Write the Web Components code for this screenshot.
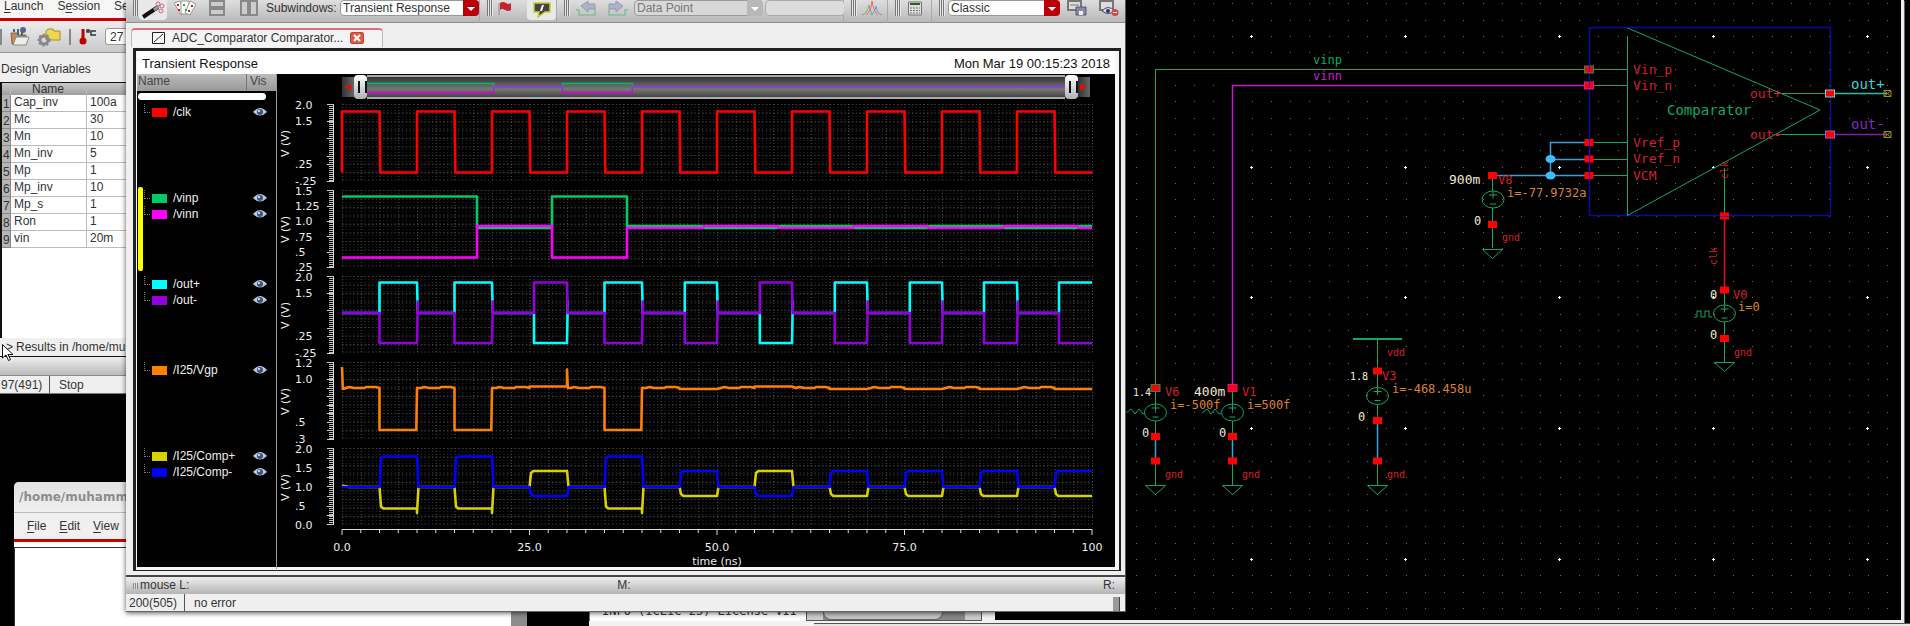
<!DOCTYPE html>
<html lang="en">
<head>
<meta charset="utf-8">
<title>ADC_Comparator - Virtuoso</title>
<style>
html,body{margin:0;height:100%;background:#000;overflow:hidden}
body{font:12px "Liberation Sans",Arial,sans-serif;color:#333}
</style>
</head>
<body>
<eda-desktop></eda-desktop>
<script>
const base = `<style>*{box-sizing:border-box}:host{display:block}svg{display:block;overflow:visible}
button,input,select{font:inherit;color:inherit;margin:0;padding:0;border:0;background:none}
a{color:inherit;text-decoration:none}</style>`;
function define(name, html, setup) {
  customElements.define(name, class extends HTMLElement {
    constructor() {
      super();
      const root = this.attachShadow({mode: 'open'});
      root.innerHTML = base + (typeof html === 'function' ? html(this) : html);
      if (setup) setup(root, this);
    }
  });
}

/* ---------- toolbar pieces ---------- */
define('tool-group', `<style>
:host{display:flex;align-items:center;height:23px;padding:0 0 6px 7px;border-bottom:1px solid #8e8e8e;border-right:1px solid #aaa;background:linear-gradient(#dedede,#b9b9b9)}
:host([last]){flex:1;border-right:0}
i{flex:none;width:6px;height:16px;background:repeating-linear-gradient(90deg,#777 0 1px,#e8e8e8 1px 2px)}
</style><i></i><slot></slot>`);
define('drop-down', `<style>
:host{flex:none;position:relative;height:16px}
:host([wide]){width:139px}:host([data]){width:129px;color:#777}:host([style-set]){width:112px}
select{appearance:none;width:100%;height:16px;padding:0 18px 0 2px;background:#fff;border:1px solid #999;border-radius:4px;line-height:14px}
span{position:absolute;right:0;top:0;width:16px;height:16px;background:#b90008;border-radius:0 4px 4px 0;pointer-events:none}
span::after{content:"";position:absolute;left:4px;top:7px;border:4px solid transparent;border-top-color:#fff;border-bottom:0}
:host([data]) select{background:#d8d8d8}:host([data]) span{background:#b8b8b8}
</style><select></select><span></span>`, (root, el) => {
  const s = root.querySelector('select');
  s.setAttribute('aria-label', el.getAttribute('label'));
  s.append(new Option(el.getAttribute('value')));
});

/* ---------- results browser window ---------- */
const vars = [['Cap_inv','100a'],['Mc','30'],['Mn','10'],['Mn_inv','5'],['Mp','1'],['Mp_inv','10'],['Mp_s','1'],['Ron','1'],['vin','20m']];
define('variables-window', `<style>
:host{display:flex;flex-direction:column;background:#efefef;overflow:hidden;white-space:nowrap}
nav{display:flex;height:18px;padding-left:4px;line-height:12px;gap:14px;background:#f6f6f6}
u{text-underline-offset:2px}
.rule{height:3px;background:#c00}
.tools{display:flex;align-items:center;gap:8px;height:32px;background:linear-gradient(#eee,#c9c9c9);border-bottom:1px solid #999}
.tools i{width:3px;height:16px;border:1px solid #888;border-width:0 1px}
.tools svg{flex:none}
.tools input{width:60px;height:17px;padding-left:4px;background:#fff;border:1px solid #999;border-radius:3px}
h2{margin:0;padding:8px 0 0 1px;height:29px;font:12px/17px "Liberation Sans",Arial,sans-serif}
.box{border:1px solid #111;border-width:1px 0 0 2px;height:256px;background:#fff}
table{border-collapse:separate;border-spacing:0;table-layout:fixed;width:200px}
th,td{padding:0 0 0 3px;height:17px;line-height:14px;vertical-align:top;text-align:left;font-weight:400;border:1px solid #bbb;border-width:0 1px 1px 0}
thead th{height:12px;line-height:12px;background:linear-gradient(#c9c9c9,#9f9f9f);border-bottom:0;padding:0 0 0 21px}
tbody th{background:#b5b5b5;border-color:#888;padding:2px 0 0 1px}
.res{height:19px;line-height:19px;padding-left:6px;border-bottom:1px solid #111}
.res span{margin-left:3px}
.grip{height:19px;background:linear-gradient(#eee,#bbb);border-bottom:1px solid #888}
footer{display:flex;height:18px;line-height:19px;padding-left:1px;border-bottom:1px solid #777}
footer b{font-weight:400;width:49px;border-right:1px solid #555;margin-right:9px}
</style>
<nav><a href="#l"><u>L</u>aunch</a><a href="#s">S<u>e</u>ssion</a><a href="#t">Se</a></nav><div class="rule"></div>
<div class="tools"><i></i>
<svg width="20" height="20" viewBox="0 0 20 20"><path d="M1 6h6l1 2h8v9H2z" fill="#c98a4a" stroke="#765"/><path d="M3 18l3-8h13l-3 8z" fill="#eee" stroke="#888"/><path d="M8 8V2M12 9V3M4 5V2" stroke="#468" stroke-width="2"/><circle cx="13" cy="3" r="3" fill="#568"/></svg>
<svg width="23" height="18" viewBox="0 0 23 18"><path d="M8 3l2-2h5l1 2h6v9H8z" fill="#edd74e" stroke="#a88c1f"/><circle cx="6" cy="12" r="4" fill="none" stroke="#888" stroke-width="3"/><circle cx="6" cy="12" r="5.5" fill="none" stroke="#888" stroke-width="2" stroke-dasharray="2 2"/></svg>
<i></i>
<svg width="18" height="17" viewBox="0 0 18 17"><path d="M4 1v10" stroke="#b00" stroke-width="3"/><circle cx="4" cy="13" r="3.5" fill="#b00"/><path d="M8 2h2v2H8zM17 3h-5v4h5" fill="none" stroke="#333" stroke-width="1.5"/></svg>
<input value="27" aria-label="Temperature"></div>
<h2>Design Variables</h2>
<div class="box"><table><colgroup><col style="width:9px"><col style="width:76px"><col></colgroup>
<thead><tr><th></th><th>Name</th><th></th></tr></thead><tbody>${vars.map((v,i)=>`<tr><th>${i+1}</th><td>${v[0]}</td><td>${v[1]}</td></tr>`).join('')}</tbody></table></div>
<div class="res">&gt;<span>Results in /home/mu</span></div><div class="grip"></div>
<footer><b>97(491)</b>Stop</footer>`);

/* ---------- log window ---------- */
define('log-window', `<style>
:host{display:flex;flex-direction:column;background:#fff;border-radius:5px 0 0 0;overflow:hidden}
h1{margin:0;height:31px;padding-left:5px;font:bold 12px/30px "DejaVu Sans",sans-serif;color:#8d8d8d;background:linear-gradient(#e2e2e2,#f0f0f0);border-bottom:1px solid #bbb}
nav{display:flex;gap:13px;height:26px;padding-left:13px;line-height:27px;background:#f0f0f0}
u{text-underline-offset:2px}
.rule{height:3px;background:#c00}
.pane{flex:1;margin-top:5px;border:1px solid #333;border-width:1px 16px 0 1px;border-right-color:#8c8c8c;background:#fff}
</style><h1>/home/muhamm</h1><nav><a href="#f"><u>F</u>ile</a><a href="#e"><u>E</u>dit</a><a href="#v"><u>V</u>iew</a></nav><div class="rule"></div><div class="pane"></div>`);
define('console-window', `<style>
:host{display:flex;background:#f2f2f2;overflow:hidden}
pre{margin:0;flex:none;width:217px;height:18px;padding-left:12px;font:12px/16px "DejaVu Sans Mono",monospace;background:#fff;border-left:1px solid #777}
.bar{display:flex;width:176px;height:18px;border:1px solid #555;border-top:0;background:#888}
.bar b{width:16px;background:#ccc}.bar i{width:120px;border-radius:0 0 8px 8px;background:#c4c4c4;border:1px solid #666;border-top:0}
.bar b:last-child{margin-left:auto}
</style><pre>INFO (icLic-25) License VII</pre><div class="bar"><b></b><i></i><b></b></div>`);

/* ---------- waveform viewer ---------- */
const X = t => +(t * 7.5).toFixed(1);
const line = pts => 'M' + pts.map(p => X(p[0]) + ' ' + p[1]).join('L');
function clk() {
  const p = [[0, 68.5]];
  for (let t = 0; t < 100; t += 10) p.push([t, 68.5], [t, 7.5], [t + 5, 7.5], [t + 5.1, 68.5]);
  p.push([100, 68.5]);
  return line(p);
}
function vin(hi, a, b) {
  const p = [[0, hi], [18, hi], [18, a], [28, a], [28, hi], [38, hi]];
  for (let t = 38, i = 0; t < 100; t += 10, i++) { const y = i % 2 ? a : b; p.push([t + (i ? .3 : 0), y], [Math.min(t + 10, 100), y]); }
  return line(p);
}
const outPulses = [[5,10,1],[15,20,1],[25.6,30,-1],[35,40,1],[45.7,50,1],[55.7,60,-1],[65.7,70,1],[75.7,80,1],[85.6,90,1],[95.6,100,1]];
function out(sign) {
  const p = [[0, 37]];
  outPulses.forEach(([a, b, s]) => {
    const y = s * sign > 0 ? 6.5 : 67;
    p.push([a, 37], [a, y], [b, y]);
    if (b < 100) p.push([b + .1, y > 37 ? 25.5 : 37], [b + .1, 37]);
  });
  return line(p);
}
function vgp() {
  const p = [[0, 5], [.1, 27]];
  for (let t = 0; t < 100; t += 5) {
    if ([5, 15, 35].includes(t)) { p.push([t, 26], [t, 68], [t + 4.9, 68], [t + 5, 26]); continue; }
    if (t === 25 || t === 55) { p.push([t, 24.5], [t + 5, 24.5]); if (t === 25) p.push([30, 7.5], [30.1, 26]); continue; }
    if (t % 10 === 5) { p.push([t, 27], [t + 5, 27]); continue; }
    p.push([t + .5, 26], [t + 1, 25], [t + 1.6, 26], [t + 3, 26], [t + 3.2, 25], [t + 4.5, 25], [t + 5, 26]);
  }
  return line(p);
}
function comp(blue) {
  const p = [[0, blue ? 39 : 37.5], [1, 39]];
  for (let t = 5; t < 100; t += 10) {
    let y;
    if ([5, 15, 35].includes(t)) y = blue ? 8.5 : 60.5;
    else if (t === 25 || t === 55) y = blue ? 48 : 23;
    else y = blue ? 23 : 48;
    p.push([t, 39], [t + .2, y + (y > 39 ? -2 : 2)], [t + .5, y], [t + 5, y]);
    if (y === 60.5) p.push([t + 5, 65]);
    if (t < 95) p.push([t + 5.2, 39]);
  }
  return line(p);
}
const strips = [
  {labels: [['2.0',1],['1.5',17],['.25',60],['-.25',77]], major: [0,17,34,52,60,77], names: [['/clk','#f00']], traces: [[clk(),'#f00']]},
  {labels: [['1.5',1],['1.25',16],['1.0',31],['.75',47],['.5',62],['.25',77]], major: [0,16,31,46,62,77], names: [['/vinp','#0c6'],['/vinn','#f0f']], traces: [[vin(6.5,38,36),'#0c6'],[vin(67.5,36,38),'#f0f']], selected: true},
  {labels: [['2.0',1],['1.5',17],['.25',60],['-.25',77]], major: [0,17,34,52,60,77], names: [['/out+','#0ff'],['/out-','#9400dc']], traces: [[out(1),'#0ff'],[out(-1),'#9400dc']]},
  {labels: [['1.2',1],['1.0',17],['.5',60],['.3',77]], major: [0,17,26,34,43,51,60,68,77], names: [['/I25/Vgp','#ff7f00']], traces: [[vgp(),'#ff7f00']]},
  {labels: [['2.0',1],['1.5',20],['1.0',39],['.5',58],['0.0',77]], major: [0,10,19,29,38,48,58,67,76], names: [['/I25/Comp+','#d8d000'],['/I25/Comp-','#00f']], traces: [[comp(false),'#d8d000'],[comp(true),'#00f']]}
];
let nextStrip = 0;
define('wave-strip', () => {
  const s = strips[nextStrip++];
  return `<style>:host{display:grid;grid-template-columns:65px minmax(0,1fr);height:86px}
text{font:11px "DejaVu Sans",sans-serif;fill:#eee}.plot{width:100%;height:77px}</style>
<svg width="65" height="77">${s.labels.map(l=>`<text x="18" y="${l[1]+4}">${l[0]}</text>`).join('')}
<text transform="translate(12 53) rotate(-90)">V (V)</text>
<path d="M54.5 0V77" stroke="#bbb" stroke-width="5" stroke-dasharray="1 1"/><path d="M56.5 0V77" stroke="#ddd"/>
<path d="${s.major.map(y=>`M50 ${y+.5}H57`).join('')}" stroke="#ccc"/></svg>
<svg class="plot" viewBox="0 0 750 77" preserveAspectRatio="none">
<defs><pattern id="f" width="3.75" height="3" patternUnits="userSpaceOnUse"><rect width="1" height="1" fill="#262626"/></pattern>
<pattern id="h" width="3.75" height="8.5" patternUnits="userSpaceOnUse"><rect width="1.5" height="1" fill="#404040"/></pattern>
<pattern id="v" width="18.75" height="3" patternUnits="userSpaceOnUse"><rect width="1" height="1" fill="#484848"/></pattern></defs>
<rect width="751" height="77" fill="url(#f)"/><rect width="751" height="77" fill="url(#h)"/><rect width="751" height="77" fill="url(#v)"/>
${s.traces.map(t=>`<path d="${t[0]}" fill="none" stroke="${t[1]}" stroke-width="2.6" stroke-linejoin="round" vector-effect="non-scaling-stroke"/>`).join('')}</svg>`;
});
define('time-axis', `<style>:host{margin:-5px 0 0 65px;color:#eee;font:11px/14px "DejaVu Sans",sans-serif}
svg{width:100%;height:7px}.n{display:flex;justify-content:space-between;margin:5px -20px 0}.n span{width:40px;text-align:center}
p{margin:0;text-align:center}</style>
<svg viewBox="0 0 750 7" preserveAspectRatio="none"><path d="M0 .5H750${Array.from({length:41},(_,i)=>`M${i*18.75} .5V${i%10?4:6}`).join('')}" stroke="#ddd" fill="none" vector-effect="non-scaling-stroke"/></svg>
<div class="n"><span>0.0</span><span>25.0</span><span>50.0</span><span>75.0</span><span>100</span></div><p>time (ns)</p>`);
define('range-slider', `<style>:host{display:flex;align-items:center;height:30px;padding:0 2px 4px 65px}
button{flex:none;width:12px;height:20px;background:linear-gradient(90deg,#333,#666)}
button svg{margin:0 2px}
.g{flex:none;width:13px;height:24px;background:linear-gradient(#fff,#aeb3b7);border-radius:4px;padding:6px 4px}
.g::after{content:"";display:block;width:5px;height:12px;border:2px solid #111;border-width:0 2px}
.t{flex:1;min-width:0;height:24px;border:2px solid #aaa;border-width:2px 0;background:linear-gradient(#333,#777 60%,#444)}
.t svg{width:100%;height:20px}</style>
<button aria-label="Pan left"><svg width="8" height="6"><path d="M0 3L7 0V6z" fill="#f00"/></svg></button><div class="g"></div>
<div class="t"><svg viewBox="0 0 700 20" preserveAspectRatio="none"><g fill="none" stroke-width="1.4"><path d="M0 6.500H127V10M196 10V6.500H266V10" stroke="#0b6"/><path d="M0 15.500H127V10M196 10V15.500H266V10" stroke="#d0d"/><path d="M127 9.500H196M266 9.500H700" stroke="#83f"/></g></svg></div>
<div class="g"></div><button aria-label="Pan right"><svg width="8" height="6"><path d="M7 3L0 0V6z" fill="#f00"/></svg></button>`);
define('wave-legend', `<style>:host{border-right:1px solid #999;color:#eee}
header{display:flex;height:17px;line-height:14px;padding-left:1px;color:#444;background:linear-gradient(#bbb,#999);font-size:12px}
header span{width:109px;border-right:1px solid #777;margin-right:3px}
.s{width:128px;height:7px;margin:2px 0 4px 1px;border-radius:4px;background:#fff}
section{height:86px;position:relative}
section.on::before{content:"";position:absolute;left:1px;top:-3px;width:5px;height:84px;border-radius:2px;background:#ff0}
.r{display:flex;align-items:center;height:16px;padding-left:15px}
.r::before{content:"";position:absolute;left:7px;width:5px;height:8px;margin-top:-8px;border:1px dotted #777;border-width:0 0 1px 1px}
.r i{width:15px;height:9px;margin-right:6px}.r svg{margin-left:auto;margin-right:9px}</style>
<header><span>Name</span>Vis</header><div class="s"></div>
${strips.map(s=>`<section class="${s.selected?'on':''}">${s.names.map(n=>`<div class="r"><i style="background:${n[1]}"></i>${n[0]}<svg width="14" height="10"><path d="M0 5Q7-3 14 5Q7 12 0 5z" fill="#b9c8e6"/><circle cx="7" cy="5" r="3" fill="#3f5478"/><circle cx="6" cy="4" r="1" fill="#fff"/></svg></div>`).join('')}</section>`).join('')}`);

const ico = (w, s) => `<span class="c" style="width:${w}px">${s}</span>`;
define('wave-window', `<style>
:host{display:flex;flex-direction:column;background:#efefef;border-right:1px solid #555;box-shadow:0 1px 5px #000a;white-space:nowrap}
.tools{display:flex;height:23px}
.c{flex:none;display:flex;align-items:center;justify-content:center;height:17px}
.hi{background:#e8e8e8;border-radius:0 0 4px 4px;height:20px;margin-bottom:-3px}
.lb{width:74px}.tools input{width:80px;height:16px;margin-left:2px;border:1px solid #aaa;border-radius:4px;background:#dcdcdc}
.tabs{height:25px;padding:5px 0 0 5px}
.tab{display:flex;align-items:center;gap:7px;width:252px;height:19px;padding:0 0 2px 20px;border:1px solid #bbb;border-top:2px solid #dd7078;border-bottom:0;border-radius:4px 4px 0 0;background:#f4f4f4}
.tab button{width:14px;height:12px;background:#dc5c42;border-radius:2px;border:1px solid #b44}
.frame{flex:1;margin:0 4px 0 7px;border:solid #222;border-width:3px 2px 1px 3px;padding:0 4px 3px 1px;background:#f6f6f6}
.title{display:flex;justify-content:space-between;height:23px;line-height:26px;padding:0 5px;background:#fff;color:#111;font-size:13px}
.body{display:grid;grid-template-columns:140px minmax(0,1fr);background:#000;height:493px}
.plots{padding-right:23px}
.mouse{display:grid;grid-template-columns:1fr 1fr 1fr;height:19px;margin-top:4px;padding:0 10px 0 7px;line-height:17px;border-top:2px solid #444;background:linear-gradient(#eee,#b4b4b4)}
.mouse span:first-child::before{content:"";display:inline-block;width:5px;height:6px;margin-right:2px;background:repeating-linear-gradient(90deg,#888 0 1px,#ddd 1px 2px)}
.mouse span:nth-child(2){text-align:center}.mouse span:last-child{text-align:right}
.status{display:flex;height:18px;line-height:18px;padding-left:3px;border-bottom:1px solid #666}
.status b{font-weight:400;width:56px;border-right:1px solid #555;margin-right:9px}
.status i{width:7px;height:14px;margin:3px 5px 0 auto;background:#999;border-right:1px solid #444}
</style>
<div class="tools">
<tool-group style="width:354px">
${ico(28,`<span class="c hi" style="width:28px"><svg width="24" height="18"><path d="M2 16L17 6" stroke="#111" stroke-width="4"/><path d="M13 9L18 5" stroke="#999" stroke-width="3"/><g fill="none" stroke="#c68"><circle cx="17" cy="3" r="2"/><circle cx="21" cy="5" r="2"/><circle cx="20" cy="10" r="2"/></g></svg></span>`)}
${ico(36,`<svg width="24" height="16"><g stroke="#999" fill="#fff"><path d="M1 3l6-2 5 12-4 2z"/><path d="M8 1h8v13H8z"/><path d="M17 1l6 3-6 11-5-2z"/></g><path d="M5 4v2M6 9v2M19 5v2M16 10v2" stroke="#c22" stroke-width="2"/><path d="M11 4v2M13 9v2" stroke="#2a4" stroke-width="2"/></svg>`)}
${ico(28,`<svg width="16" height="16"><path d="M1 1h14v6H1zM1 9h14v6H1z" fill="#ccc" stroke="#888" stroke-width="2"/></svg>`)}
${ico(35,`<svg width="18" height="16"><path d="M1 1h7v14H1zM10 1h7v14h-7z" fill="#ccc" stroke="#888" stroke-width="2"/></svg>`)}
<span class="lb">Subwindows:</span><drop-down wide value="Transient Response" label="Subwindows"></drop-down></tool-group>
<tool-group style="width:77px">
${ico(24,`<svg width="14" height="14"><path d="M1 2v12" stroke="#888"/><path d="M2 2q3-2 6 0t5 0v7q-3 2-6 0t-5 0z" fill="#c8222c"/></svg>`)}
${ico(10,'')}
<span class="c hi" style="width:29px"><svg width="20" height="16"><path d="M2 1h16v9h-5l-7 5 1-5H2z" fill="#444" stroke="#cc3" stroke-width="1.5"/><path d="M11 3L9 9" stroke="#fff" stroke-width="2"/></svg></span></tool-group>
<tool-group style="width:287px">
${ico(32,`<svg width="20" height="16"><path d="M0 10h3v5h16V9" fill="none" stroke="#8b9" stroke-width="1.500"/><path d="M5 6l7-5v3h7v5h-7v3z" fill="#aab4cc" stroke="#99a"/></svg>`)}
${ico(32,`<svg width="20" height="16"><path d="M20 10h-3v5H1V9" fill="none" stroke="#8b9" stroke-width="1.500"/><path d="M15 6L8 1v3H1v5h7v3z" fill="#aab4cc" stroke="#99a"/></svg>`)}
<drop-down data value="Data Point" label="Data point"></drop-down><input aria-label="Value"></tool-group>
<tool-group style="width:44px">${ico(29,`<svg width="20" height="16" fill="none"><path d="M0 15Q5 14 7 5q2 9 4 10" stroke="#6b6"/><path d="M4 15Q9 12 10 1q2 12 6 14" stroke="#e66"/><path d="M8 15q5-2 6-9 1 8 6 9" stroke="#79c"/></svg>`)}</tool-group>
<tool-group style="width:44px">${ico(28,`<svg width="14" height="15"><path d="M.5 1h13v13H.5z" fill="#ddd" stroke="#777"/><path d="M2 3h10" stroke="#262" stroke-width="2"/><path d="M2 7h10M2 9.500h10M2 12h10" stroke="#777" stroke-dasharray="2 1"/></svg>`)}</tool-group>
<tool-group last>${ico(3,'')}<drop-down style-set value="Classic" label="Style"></drop-down>
${ico(34,`<svg width="20" height="16"><path d="M1 1h13v9H1z" fill="#ddd" stroke="#777" stroke-width="2"/><path d="M3 5h9" stroke="#777"/><path d="M9 7h10v8H9z" fill="#88a" stroke="#557"/><path d="M12 11h4v4h-4z" fill="#eee"/></svg>`)}
${ico(30,`<svg width="20" height="16"><path d="M1 1h13v9H1z" fill="#ddd" stroke="#777" stroke-width="2"/><path d="M3 11q6-7 13 0-7 5-13 0z" fill="#dde" stroke="#447"/><circle cx="9" cy="11" r="2" fill="#336"/><circle cx="16" cy="12.500" r="3.500" fill="#d44"/><path d="M14 12.500h4" stroke="#fff"/></svg>`)}</tool-group>
</div>
<div class="tabs"><div class="tab"><svg width="13" height="12"><path d="M.5.5h12v11H.5z" fill="#fff" stroke="#222"/><path d="M2 10L11 2" stroke="#222"/></svg><span>ADC_Comparator Comparator...</span><button aria-label="Close tab"><svg width="12" height="10"><path d="M3 2l6 6M9 2L3 8" stroke="#fff" stroke-width="2"/></svg></button></div></div>
<div class="frame"><div class="title"><span>Transient Response</span><span>Mon Mar 19 00:15:23 2018</span></div>
<div class="body"><wave-legend></wave-legend><div class="plots"><range-slider></range-slider>${'<wave-strip></wave-strip>'.repeat(5)}<time-axis></time-axis></div></div></div>
<div class="mouse"><span>mouse L:</span><span>M:</span><span>R:</span></div>
<div class="status"><b>200(505)</b>no error<i></i></div>`);

/* ---------- schematic ---------- */
const sq = (x, y, c) => `<rect x="${x-4.5}" y="${y-3.5}" width="9" height="7" fill="#f00" ${c?`stroke="${c}"`:''}/>`;
const src = (x, y) => `<ellipse cx="${x}" cy="${y}" rx="11" ry="8.500"/><path d="M${x} ${y-8}V${y-1}M${x-4} ${y-4.5}H${x+4}M${x-3} ${y+4.5}H${x+3}"/>`;
const gnd = (x, y) => `<path d="M${x-10} ${y}H${x+10}L${x} ${y+9}z"/>`;
const T = (x, y, s, c, z = 12) => `<text x="${x}" y="${y}" fill="${c}" font-size="${z}">${s}</text>`;
const R = '#d4202a', O = '#dd8030', W = '#eee8d8', G = '#10a868', bigs = [], dots = [];
for (let x = 1251.5; x < 1900; x += 154.1) for (const y of [36.5, 167.5, 297.5, 428.5, 559.5]) bigs.push(`M${Math.floor(x)-1} ${y}h3M${Math.floor(x)+.5} ${y-1.5}v3`);
for (let i = 0; i < 40; i++) for (let j = 0; j < 38; j++) dots.push(`M${Math.round(1136 + i * 19.26)} ${Math.round(3.3 + j * 16.34) + .5}h1`);
define('schematic-window', `<style>
:host{background:#000;border:solid #eee;border-width:0 3px 3px 0;overflow:hidden;box-shadow:1px 1px #666}
svg{width:100%}text{font-family:"DejaVu Sans Mono",monospace}</style>
<svg viewBox="995 0 906 620" preserveAspectRatio="xMinYMin meet">
<path d="${dots.join('')}" stroke="#6c6c6c"/><path d="${bigs.join('')}" stroke="#fff"/>
<path d="M1589.500 27.500H1830.500V215.500H1589.500z" fill="none" stroke="#0a0aa0" stroke-width="1.500"/>
<g fill="none" stroke="${G}">
<path d="M1627.500 36V215.500L1820 110L1627.500 28M1589 69.500H1627M1589 85.500H1627M1589 142.500H1627M1589 159.500H1627M1589 175.500H1627M1782 93.500H1830M1782 134.500H1830M1724.500 168V216"/>
<path d="M1155.500 387V69.500H1589M1155.500 391V405M1155.500 421V436M1155.500 461V485M1232.500 391V405M1232.500 421V436M1232.500 461V485"/>
<path d="M1353 339H1402" stroke-width="2"/><path d="M1377.500 339V387M1377.500 405V420M1377.500 461V485M1492.500 175V191M1492.500 208V248M1724.500 289V305M1724.500 322V362"/>
${src(1155.5,412.5)}${src(1232.5,412.5)}${src(1377.5,396)}${src(1493,199.5)}${src(1724.5,313.5)}
${gnd(1155.5,485.5)}${gnd(1232.5,485.5)}${gnd(1377.5,485.5)}${gnd(1492.5,249.5)}${gnd(1724.5,362.500)}
<path d="M1126 413l5-4 4 5 4-5 4 5 2-1M1202 413l5-4 4 5 4-5 4 5 2-1M1694 317h3v-6h4v6h4v-6h4v6h3"/></g>
<path d="M1232.500 387V85.500H1589" fill="none" stroke="#c020c8" stroke-width="1.500"/>
<path d="M1155.500 436V461M1232.500 436V461M1377.500 420V461M1492.500 175.500H1589M1550.500 175V142.500H1589M1550.500 159.500H1589" fill="none" stroke="#38a0e0" stroke-width="1.500"/>
<ellipse cx="1550.500" cy="159" rx="5" ry="4" fill="#38c0ff"/><ellipse cx="1550.500" cy="175.500" rx="5" ry="4" fill="#38c0ff"/>
<path d="M1724.500 216V290" stroke="#e01018" stroke-width="1.500"/><path d="M1774 93.500h8M1774 134.500h8" stroke="${R}"/>
<path d="M1830 93.500H1887" stroke="#30b8b0" stroke-width="1.500"/><path d="M1830 134.500H1887" stroke="#8020b0" stroke-width="1.500"/>
<path d="M1884 90.500h7v6h-7zM1884 90.500l7 6m0-6l-7 6M1884 131.500h7v6h-7zM1884 131.500l7 6m0-6l-7 6" fill="none" stroke="#a09010"/>
${sq(1589,69.5,'#2a8a4a')}${sq(1589,85.5,'#d020a0')}${sq(1589,142.5)}${sq(1589,159)}${sq(1589,175.5)}${sq(1830,93.5,'#7cc')}${sq(1830,134.5,'#a5c')}${sq(1724.5,216)}${sq(1724.5,290)}${sq(1724.5,338.5)}
${sq(1492.5,175.5)}${sq(1492.5,224.5)}${sq(1155.5,388,'#2a8a4a')}${sq(1232.5,388,'#e010a0')}${[1155.500,1232.500].map(x=>sq(x,436.5)+sq(x,461)).join('')}${sq(1377.5,371)}${sq(1377.5,420.5)}${sq(1377.5,461)}
<path d="M1589.500 66v6M1589.500 82v6M1589.500 139v41M1720 216.500h9" stroke="#40a"/>
${T(1313,64,'vinp',G)}${T(1313,80,'vinn','#c020c8')}
${T(1633,74,'Vin_p',R,13)}${T(1633,90,'Vin_n',R,13)}${T(1633,147,'Vref_p',R,13)}${T(1633,163,'Vref_n',R,13)}${T(1633,180,'VCM',R,13)}
${T(1750,98,'out+',R,13)}${T(1750,139,'out-',R,13)}${T(1667,115,'Comparator',G,14)}
${T(1851,89,'out+','#40d0d0',14)}${T(1851,129,'out-','#8828b8',14)}
<text transform="translate(1728 179) rotate(-90)" fill="${R}" font-size="10">clk</text><text transform="translate(1717 265) rotate(-90)" fill="${R}" font-size="10">clk</text>
${T(1449,184,'900m',W,13)}${T(1498,184,'V8',R)}${T(1507,197,'i=-77.9732a',O)}${T(1474,225,'0',W)}${T(1502,241,'gnd',R,10)}
${T(1133,396,'1.4',W,10)}${T(1165,396,'V6',R)}${T(1170,409,'i=-500f',O)}${T(1142,437,'0',W)}${T(1165,478,'gnd',R,10)}
${T(1194,396,'400m',W,13)}${T(1242,396,'V1',R)}${T(1247,409,'i=500f',O)}${T(1219,437,'0',W)}${T(1242,478,'gnd',R,10)}
${T(1350,380,'1.8',W,10)}${T(1382,380,'V3',R)}${T(1392,393,'i=-468.458u',O)}${T(1358,421,'0',W)}${T(1387,478,'gnd',R,10)}${T(1387,356,'vdd',R,10)}
${T(1710,299,'0',W)}${T(1733,299,'V0',R)}${T(1738,311,'i=0',O)}${T(1710,339,'0',W)}${T(1734,356,'gnd',R,10)}
</svg>`);

/* ---------- desktop ---------- */
define('eda-desktop', `<style>
:host{position:relative;height:100vh;overflow:hidden;background:#000}
:host>*,.w{position:absolute}
.vars{left:0;top:0;width:126px}
.log{left:14px;top:482px;width:513px;bottom:0}
.con{left:589px;top:603px;right:915px;bottom:0}
.tail{left:814px;right:0;bottom:0;height:3px;background:#e4e4e0;border-top:1px solid #555}
.sch{left:995px;top:0;right:6px;bottom:3px}
.wave{left:126px;top:0;right:784px}
.cur{left:2px;top:344px}
</style>
<variables-window class="w vars"></variables-window><log-window class="w log"></log-window><console-window class="w con"></console-window>
<schematic-window class="w sch"></schematic-window><div class="w tail"></div><wave-window class="w wave"></wave-window>
<svg class="w cur" width="13" height="18"><path d="M.5.5V14l3.500-3 2.500 5.500 2-1L6 10.500h5z" fill="#fff" stroke="#111"/></svg>`);
</script>
</body>
</html>
